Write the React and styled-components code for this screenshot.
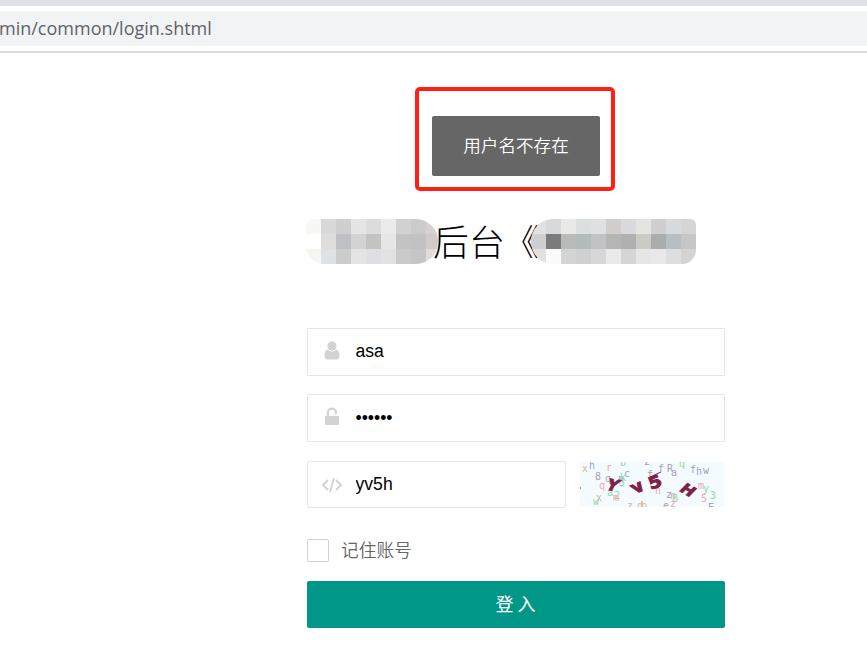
import React from "react";
import styled, { createGlobalStyle } from "styled-components";

const Global = createGlobalStyle`
  * { box-sizing: border-box; }
  html, body { margin: 0; padding: 0; background: #fff; }
  body { overflow: hidden; }
`;

const cjk = `"Noto Sans CJK SC", sans-serif`;

const Page = styled.div`
  position: relative;
  width: 867px;
  height: 671px;
  overflow: hidden;
  background: #fff;
  font-family: "Liberation Sans", ${cjk};
`;

const BrowserBar = styled.header`
  height: 53px;
  border-top: 6px solid #dee1e6;
  border-bottom: 2px solid #dadbe0;
  padding-top: 5px;
`;

const Address = styled.div`
  height: 35px;
  background: #f1f3f4;
  color: #5f6368;
  font: 18px/34px "Open Sans", "Noto Sans", sans-serif;
  letter-spacing: 0;
  white-space: nowrap;
  text-indent: -1px;
`;

const Highlight = styled.div`
  position: absolute;
  left: 415px;
  top: 87px;
  width: 200px;
  height: 104px;
  border: 4px solid #ff2015;
  border-radius: 5px;
`;

const Toast = styled.div`
  position: absolute;
  left: 432px;
  top: 116px;
  width: 168px;
  height: 60px;
  border-radius: 2px;
  background: #666;
  color: #fff;
  font: 350 17.6px/57px ${cjk};
  text-align: center;
`;

const Main = styled.main`
  width: 418px;
  margin: 166px 0 0 307px;
`;

const Title = styled.h1`
  display: flex;
  height: 45px;
  width: 390px;
  margin: 0 0 64px -1px;
  color: #000;
  font: 300 36px/43px ${cjk};
`;

const TitleText = styled.span`
  width: 98px;
  flex: none;
  margin: 0 0 0 -5px;
  white-space: nowrap;
`;

const OpenMark = styled.span`
  margin-left: -2px;
`;

const Mosaic = styled.div`
  position: relative;
  z-index: 1;
  flex: none;
  display: grid;
  grid-template-columns: repeat(${(p) => p.$cols}, 15px);
  grid-auto-rows: 15px;
  width: ${(p) => p.$width}px;
  height: 45px;
  overflow: hidden;
  border-radius: ${(p) => p.$radius};
`;

const Tile = styled.i`
  background: ${(p) => p.$color};
`;

const Field = styled.label`
  display: flex;
  align-items: center;
  width: ${(p) => p.$width || 418}px;
  height: ${(p) => p.$height || 48}px;
  border: 1px solid #e6e6e6;
  border-radius: 2px;
  background: #fff;
`;

const IconSlot = styled.span`
  display: flex;
  justify-content: center;
  width: 47.5px;
  padding-bottom: ${(p) => p.$lift || 0}px;
  flex: none;
`;

const Input = styled.input`
  flex: 1;
  min-width: 0;
  height: 44px;
  padding: 0 0 ${(p) => p.$lift ?? 2}px;
  border: 0;
  outline: 0;
  background: transparent;
  color: #000;
  font: 17.6px "Liberation Sans", sans-serif;
`;

const Fields = styled.div`
  display: flex;
  flex-direction: column;
  gap: 18px;
`;

const CaptchaRow = styled.div`
  display: flex;
  align-items: center;
  gap: 14px;
  margin-top: 1px;
`;

const CaptchaArt = styled.svg`
  display: block;
  background: #f3fbff;
`;

const Remember = styled.div`
  display: flex;
  align-items: center;
  gap: 12px;
  height: 24px;
  margin-top: 30px;
  color: #666;
  font: 350 17.7px/22px ${cjk};
`;

const RememberText = styled.span`
  height: 24px;
`;

const CheckBox = styled.span`
  width: 22px;
  height: 23px;
  margin-top: 1px;
  border: 1px solid #d2d2d2;
  border-radius: 2px;
`;

const Submit = styled.button`
  display: block;
  width: 418px;
  height: 47px;
  margin-top: 19px;
  padding: 0 1px 3px 0;
  border: 0;
  border-radius: 2px;
  background: #009688;
  color: #fff;
  font: 400 18px/44px ${cjk};
`;

const leftTiles = [
  "#f7f7f5", "#d8d8d8", "#cfcfcf", "#e5e5e5", "#dcdcdc", "#ebebeb", "#d1d1d1", "#cbcbcb", "#d5d1d1",
  "#ffffff", "#dfdddb", "#bec0c3", "#d3d3d3", "#c3c3c2", "#e6e6e6", "#c3c3c3", "#c0c2c3", "#d1cbcc",
  "#f6f5f2", "#dfe2e4", "#cccccc", "#e4e4e4", "#dddfe2", "#e3e2e1", "#cacaca", "#c6c4c4", "#e0dcda",
];

const rightTiles = [
  "#e0e1e3", "#d7d9da", "#e9e9e7", "#dbdfe0", "#dee0e3", "#d0cdcb", "#d9dadd", "#e4e4e1", "#cfcfcf", "#d7dbdc", "#d5d5d5",
  "#cfcfcf", "#7b7b7b", "#b9bbba", "#b4bbbb", "#c1c2c4", "#b5b5b5", "#b0b0b0", "#cbcbc6", "#aaadac", "#b8bfc3", "#c6c6c6",
  "#e1e1e1", "#fafafa", "#d4d4d4", "#cfd1d0", "#d7d7da", "#ebeae8", "#d5d5d5", "#e6e6e6", "#e9e9e9", "#dddfdf", "#d4d4d4",
];

const green = "#97d3ab";
const blue = "#9da3d0";
const pink = "#efa9ae";
const gray = "#ab9db2";
const tan = "#dcb391";

const noise = [
  ["x", 5, 10, tan], ["h", 12, 7, blue], ["r", 29, 9, pink], ["b", 43, 4, green],
  ["z", 67, 3, gray], ["8", 18, 18, gray], ["q", 22, 27, pink], ["q", 28, 20, gray],
  ["p", 41, 20, blue], ["c", 47, 15, blue], ["k", 43, 19, green], ["5", 42, 24, green],
  ["x", 19, 39, tan], ["w", 16, 43, green], ["a", 30, 34, green], ["2", 37, 37, green],
  ["m", 36, 39, pink], ["z", 50, 47, tan], ["d", 60, 47, tan], ["b", 64, 47, tan],
  ["f", 70, 16, gray], ["f", 81, 10, blue], ["R", 90, 10, gray], ["a", 94, 14, gray],
  ["q", 102, 5, green], ["f", 113, 11, gray], ["h", 119, 13, blue], ["w", 126, 12, gray],
  ["n", 78, 32, pink], ["m", 121, 27, pink], ["y", 126, 30, green], ["5", 124, 40, pink],
  ["3", 133, 37, green], ["z", 89, 36, blue], ["n", 93, 37, pink], ["B", 95, 40, green],
  ["z", 93, 45, pink], ["e", 86, 47, gray], ["E", 131, 49, blue],
];

const Noise = styled.text`
  font: 10px "DejaVu Sans Mono", monospace;
  text-anchor: middle;
`;

const Letter = styled.text`
  font: bold 20px "DejaVu Sans", sans-serif;
  text-anchor: middle;
  fill: #7f2049;
  stroke: #7f2049;
  stroke-width: 1.2px;
`;

function Captcha() {
  return (
    <CaptchaArt width="144" height="45" viewBox="0 0 144 45">
      {noise.map(([c, x, y, fill], i) => (
        <Noise key={i} x={x} y={y} fill={fill}>{c}</Noise>
      ))}
      <Letter transform="translate(33 23) rotate(8) skewX(-18) scale(.76 .78)" y="7">Y</Letter>
      <Letter transform="translate(58 26) rotate(-22) skewX(14) scale(.88 .85)" y="5">v</Letter>
      <Letter transform="translate(75 20) rotate(-20) scale(.95 .82)" y="7">5</Letter>
      <Letter transform="translate(108 28) rotate(30) skewX(-14) scale(.8 .74)" y="7">H</Letter>
      <path d="M70 15 81 10M0 26h1" stroke="#7f2049" strokeWidth="1" />
    </CaptchaArt>
  );
}

function UserIcon() {
  return (
    <svg width="16" height="19" viewBox="0 0 16 19" fill="#d2d2d2">
      <circle cx="8" cy="5" r="4.6" />
      <path d="M3.8 8.5C1.5 9 .5 11.3.5 15c0 2.3 1.1 3.5 3 3.5h9c1.9 0 3-1.2 3-3.5 0-3.7-1-6-3.3-6.5C11.2 9.8 9.8 10.4 8 10.4S4.8 9.8 3.8 8.5Z" />
    </svg>
  );
}

function UnlockIcon() {
  return (
    <svg width="16" height="19" viewBox="0 0 16 19" fill="none">
      <path d="M3.8 10V5.7a4.1 4.1 0 0 1 8.2 0V7" stroke="#d2d2d2" strokeWidth="2.2" />
      <rect x="1" y="9" width="14" height="9" rx="1" fill="#d2d2d2" />
    </svg>
  );
}

function CodeIcon() {
  return (
    <svg width="22" height="16" viewBox="0 0 22 16" fill="none" stroke="#d2d2d2" strokeWidth="1.8">
      <path d="m7 3-5 5 5 5M15 3l5 5-5 5M13 1 9 15" />
    </svg>
  );
}

export default function App() {
  return (
    <Page>
      <Global />
      <BrowserBar><Address>min/common/login.shtml</Address></BrowserBar>
      <Main>
        <Title>
          <Mosaic $cols={9} $width={132} $radius="8px 22px 22px 18px">
            {leftTiles.map((c, i) => <Tile key={i} $color={c} />)}
          </Mosaic>
          <TitleText>后台<OpenMark>《</OpenMark></TitleText>
          <Mosaic $cols={11} $width={165} $radius="22px 6px 14px 22px">
            {rightTiles.map((c, i) => <Tile key={i} $color={c} />)}
          </Mosaic>
        </Title>
        <Fields>
          <Field>
            <IconSlot $lift={3}><UserIcon /></IconSlot>
            <Input defaultValue="asa" />
          </Field>
          <Field>
            <IconSlot $lift={3}><UnlockIcon /></IconSlot>
            <Input type="password" defaultValue="asasas" $lift={0} />
          </Field>
          <CaptchaRow>
            <Field $width={259} $height={47}>
              <IconSlot><CodeIcon /></IconSlot>
              <Input defaultValue="yv5h" $lift={0} />
            </Field>
            <Captcha />
          </CaptchaRow>
        </Fields>
        <Remember><CheckBox /><RememberText>记住账号</RememberText></Remember>
        <Submit type="button">登 入</Submit>
      </Main>
      <Toast>用户名不存在</Toast>
      <Highlight />
    </Page>
  );
}
